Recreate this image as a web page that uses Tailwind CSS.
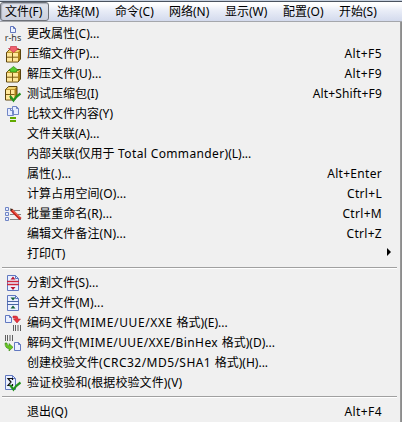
<!DOCTYPE html>
<html lang="zh-CN">
<head>
<meta charset="utf-8">
<title>文件菜单</title>
<script src="https://cdn.jsdelivr.net/npm/@tailwindcss/browser@4"></script>
</head>
<body class="w-[402px] h-[422px] overflow-hidden bg-[#f0f0f0] text-black text-[12px] leading-[20px] font-['Noto_Sans','Noto_Sans_CJK_SC',sans-serif] whitespace-nowrap flex flex-col">
<svg class="hidden">
  <symbol id="box" viewBox="0 0 27 20"><path d="M6.500 8.500l3-3h11v9.500l-2.500 3H6.500z" fill="#ad8118" stroke="#5a430c"/><path d="M7 8.300l2.800-2.300H20l-2 2.300z" fill="#f3d571"/><path d="M7 9h11v8.500H7z" fill="#ffe79a"/><path d="M12.500 9v8.500M7 13.200h11" stroke="#7d5c14"/></symbol>
</svg>
<nav class="h-[22px] shrink-0 flex border-t border-b border-t-[#c6d0de] border-b-[#a5a7ac]">
  <div class="flex-1 flex border-t border-[#4b5460] bg-linear-to-b from-white from-10% via-[#e9edf7] via-45% to-[#d3daed]">
    <div class="w-[49px] h-[19px] border border-[#6d7179] rounded-[3px] bg-linear-to-b from-[#e2e5ed] to-[#cbd0de] shadow-[inset_1px_1px_1px_#a9adb8] pl-[4px] leading-[18px]">文件(F)</div>
    <div class="w-[58px] pl-[8px] leading-[20px]">选择(M)</div>
    <div class="w-[56px] pl-[8px] leading-[20px]">命令(C)</div>
    <div class="w-[56px] pl-[6px] leading-[20px]">网络(N)</div>
    <div class="w-[57px] pl-[6px] leading-[20px]">显示(W)</div>
    <div class="w-[57px] pl-[7px] leading-[20px]">配置(O)</div>
    <div class="pl-[6px] leading-[20px]">开始(S)</div>
  </div>
</nav>
<div class="flex-1 flex">
  <main class="w-[401px] pt-[2px] border-r border-[#979797]">
    <div class="h-[20px] flex"><div class="w-[27px] flex flex-col items-center pr-[1px]"><svg class="w-[6px] h-[7px] mt-[2px] mb-px" viewBox="0 0 6 7"><path d="M.5.5h3l2 2v4h-5z" fill="#edf3ff" stroke="#6377bd"/><path d="M3.500.5v2h2" fill="none" stroke="#6377bd"/></svg><span class="text-[9px] leading-[8px] text-[#333]">r-hs</span></div>更改属性(C)...</div>
    <div class="h-[20px] flex pr-[18px]"><svg class="w-[27px] h-[20px]" viewBox="0 0 27 20"><use href="#box"/><path d="M10.500 2.500h6v2h2l-5 4-5-4h2z" fill="#f0606c" stroke="#c73045" stroke-width=".7"/></svg>压缩文件(P)...<span class="ml-auto tracking-[.4px]">Alt+F5</span></div>
    <div class="h-[20px] flex pr-[18px]"><svg class="w-[27px] h-[20px]" viewBox="0 0 27 20"><use href="#box"/><path d="M13.500 2.500l5 4h-2v1.500h-6V6.500h-2z" fill="#55cc2d" stroke="#2c8813" stroke-width=".7"/></svg><span class="tracking-[.1px]">解压文件(U)...</span><span class="ml-auto tracking-[.4px]">Alt+F9</span></div>
    <div class="h-[20px] flex pr-[18px]"><svg class="w-[27px] h-[20px]" viewBox="0 0 27 20"><path d="M5.500 5.500l3-3h8.500V13l-2.500 3h-9z" fill="#ad8118" stroke="#5a430c"/><path d="M6 5.300L8.800 3h7.700l-2 2.300z" fill="#f3d571"/><path d="M6 6h8.500v9.500H6z" fill="#ffe79a"/><path d="M10.500 6v9.500M6 10.500h8.500" stroke="#7d5c14"/><path d="M10 12l3.500 4.500q2.500-4 7-7" fill="none" stroke="#24931f" stroke-width="2.200"/></svg>测试压缩包(I)<span class="ml-auto tracking-[.15px]">Alt+Shift+F9</span></div>
    <div class="h-[20px] flex"><svg class="w-[27px] h-[20px]" viewBox="0 0 27 20"><path d="M7.500 4.500h4l2 2v5h-6zM12.500 2.500h4l2 2v6h-6z" fill="#e6edff" stroke="#7186c6"/><path d="M10.500 4.500v2h2M16.500 2.500v2h2" fill="none" stroke="#7186c6"/><path d="M10 14h6M10 17h6" stroke="#61a900" stroke-width="1.800"/></svg>比较文件内容(Y)</div>
    <div class="h-[20px] pl-[27px]">文件关联(A)...</div>
    <div class="h-[20px] pl-[27px]">内部关联(仅用于<span class="tracking-[.37px]"> Total Commander</span>)(L)...</div>
    <div class="h-[20px] pl-[27px] pr-[18px] flex justify-between"><span>属性(.)...</span><span class="tracking-[.3px]">Alt+Enter</span></div>
    <div class="h-[20px] pl-[27px] pr-[18px] flex justify-between"><span class="tracking-[.1px]">计算占用空间(O)...</span><span class="tracking-[.3px]">Ctrl+L</span></div>
    <div class="h-[20px] flex pr-[18px]"><svg class="w-[27px] h-[20px]" viewBox="0 0 27 20"><path d="M5.500 3.500h3v3h-3zM5.500 8.500h3v3h-3zM5.500 13.500h3v3h-3z" fill="#e6edff" stroke="#7186c6"/><path d="M10 6.500h10M10 10.500h11M10 15.500h11" stroke="#858585"/><path d="M11.500 6l9 9" stroke="#c9231c" stroke-width="3"/><path d="M12.500 6l7.500 7.500" stroke="#ff8b70"/><path d="M10 4.500l3 .5-2 2z" fill="#3c2413"/></svg><span class="tracking-[.1px]">批量重命名(R)...</span><span class="ml-auto tracking-[.3px]">Ctrl+M</span></div>
    <div class="h-[20px] pl-[27px] pr-[18px] flex justify-between"><span class="tracking-[.1px]">编辑文件备注(N)...</span><span class="tracking-[.3px]">Ctrl+Z</span></div>
    <div class="h-[20px] pl-[27px] flex justify-between items-center"><span class="tracking-[.1px]">打印(T)</span><svg class="w-[4px] h-[8px] mr-[9px] mt-[-5px]" viewBox="0 0 4 8"><path d="M0 0l4 4-4 4z"/></svg></div>
    <div class="h-[9px] pt-[3px] pl-[2px] pr-[3px]"><hr class="border-t-[#a0a0a0] border-b border-b-white"></div>
    <div class="h-[20px] flex"><svg class="w-[27px] h-[20px]" viewBox="0 0 27 20"><path d="M7.500 2.500h8l3 3v12h-11z" fill="#eaf0ff" stroke="#6178c0"/><path d="M15.500 2.500v3h3" fill="none" stroke="#6178c0"/><path d="M7 8.500h12M7 11.500h12" stroke="#cf263c" stroke-width="1.500"/><path d="M13 3.500l2.500 3h-5zM13 17l-2.500-3h5z" fill="#b91730"/></svg>分割文件(S)...</div>
    <div class="h-[20px] flex"><svg class="w-[27px] h-[20px]" viewBox="0 0 27 20"><path d="M7.500 2.500h8l3 3v12h-11z" fill="#eaf0ff" stroke="#6178c0"/><path d="M15.500 2.500v3h3" fill="none" stroke="#6178c0"/><path d="M7 8.500h12M7 11.500h12" stroke="#4a67a5"/><path d="M13 7.500l-2.500-3h5zM13 12.500l2.500 3h-5z" fill="#17643c"/></svg><span class="tracking-[.1px]">合并文件(M)...</span></div>
    <div class="h-[20px] flex"><svg class="w-[27px] h-[20px]" viewBox="0 0 27 20"><path d="M5.500 2.500h4l2 2v5h-6z" fill="#eaf0ff" stroke="#6178c0"/><path d="M9.500 2.500v2h2" fill="none" stroke="#6178c0"/><path d="M13 3h3q2 0 2 3h2.500L17 10l-3.500-4H16q0-1-3-1z" fill="#e8343d" stroke="#b51e2b" stroke-width=".5"/><path d="M13.500 12v6M15.500 12v6M18 12v6M20.500 12v6" stroke="#5f5f5f"/></svg><span>编码文件<span class="tracking-[.6px]">(MIME/UUE/XXE </span>格式)(E)...</span></div>
    <div class="h-[20px] flex"><svg class="w-[27px] h-[20px]" viewBox="0 0 27 20"><path d="M5.500 2v6M7.500 2v6M10 2v6M12.500 2v6" stroke="#5f5f5f"/><path d="M5 10h2q0 3 2 3v-2.500l4 3.800L9 18v-2.500q-4 0-4-5.500z" fill="#69c823" stroke="#34840f" stroke-width=".6"/><path d="M14.500 9.500h4l2 2v6h-6z" fill="#eaf0ff" stroke="#6178c0"/><path d="M18.500 9.500v2h2" fill="none" stroke="#6178c0"/></svg><span>解码文件<span class="tracking-[.43px]">(MIME/UUE/XXE/BinHex </span>格式)(D)...</span></div>
    <div class="h-[20px] pl-[27px]">创建校验文件<span class="tracking-[.45px]">(CRC32/MD5/SHA1 </span>格式)(H)...</div>
    <div class="h-[20px] flex"><svg class="w-[27px] h-[20px]" viewBox="0 0 27 20"><path d="M5.500 2.500h7l3 3v11h-10z" fill="#eaf0ff" stroke="#6178c0"/><path d="M12.500 2.500v3h3" fill="none" stroke="#6178c0"/><path d="M12.500 7V5.500H8l3 3.500-3 3.500h4.500V11" fill="none" stroke="#111" stroke-width="1.200"/><path d="M10 12l3.500 4.500q2.500-4 7-7" fill="none" stroke="#24931f" stroke-width="2.200"/></svg><span class="tracking-[.1px]">验证校验和(根据校验文件)(V)</span></div>
    <div class="h-[9px] pt-[3px] pl-[2px] pr-[3px]"><hr class="border-t-[#a0a0a0] border-b border-b-white"></div>
    <div class="h-[20px] pl-[27px] pr-[18px] flex justify-between"><span>退出(Q)</span><span class="tracking-[.4px]">Alt+F4</span></div>
  </main>
  <div class="w-[1px] bg-[#8c8c8c]"></div>
</div>
</body>
</html>
